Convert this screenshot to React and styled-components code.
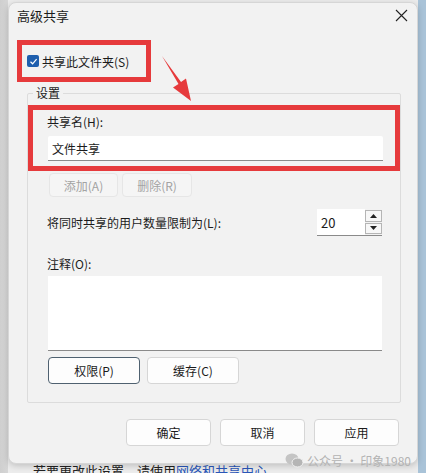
import React from "react";
import styled, { createGlobalStyle } from "styled-components";

const Global = createGlobalStyle`
  html, body { margin: 0; padding: 0; }
  body {
    font-family: "Noto Sans CJK SC", "Noto Sans", sans-serif;
    color: #1b1b1b;
  }
  * { box-sizing: border-box; }
`;

const Page = styled.div`
  position: relative;
  width: 426px;
  height: 473px;
  overflow: hidden;
  background: linear-gradient(90deg, #cfcfcf 0, #d6d6d6 8px, #ececec 8px, #ececec 418px, #a9c3d8 418px);
  padding-top: 2px;
`;

const Dialog = styled.div`
  margin-left: 8px;
  width: 410px;
  height: 462px;
  background: #f2f2f2;
  border: 1px solid #d6d6d6;
  border-radius: 8px;
  box-shadow: 0 2px 6px rgba(0, 0, 0, 0.18);
  display: flex;
  flex-direction: column;
  position: relative;
  z-index: 1;
`;

const TitleBar = styled.div`
  height: 25px;
  display: flex;
  align-items: center;
  justify-content: space-between;
  padding: 0 9px 0 8px;
  font-size: 13px;
`;

const CloseBtn = styled.div`
  width: 14px;
  height: 14px;
  display: flex;
  align-items: center;
  justify-content: center;
`;

const RedBox = styled.div`
  border: 5px solid #e63a3c;
`;

const ShareBox = styled(RedBox)`
  margin: 12px 0 0 8px;
  width: 134px;
  height: 42px;
  display: flex;
  align-items: center;
  gap: 3px;
  padding-left: 5px;
  font-size: 12px;
`;

const Check = styled.span`
  width: 12px;
  height: 12px;
  border-radius: 2px;
  background: #1f5fae;
  display: inline-flex;
  align-items: center;
  justify-content: center;
`;

const Group = styled.fieldset`
  margin: 5px 0 0 18px;
  width: 374px;
  border: 1px solid #dcdcdc;
  border-radius: 2px;
  padding: 0 0 18px 0;
  min-width: 0;
`;

const Legend = styled.legend`
  font-size: 12px;
  padding: 0 3px;
  margin-left: 5px;
  line-height: 12px;
`;

const NameBox = styled(RedBox)`
  margin-top: 6px;
  padding: 3px 12px 5px 15px;
  display: flex;
  flex-direction: column;
  gap: 5px;
`;

const Label = styled.div`
  font-size: 12px;
  line-height: 18px;
  margin-left: ${p => p.$indent || 0}px;
  margin-top: ${p => p.$top || 0}px;
`;

const TextInput = styled.div`
  height: 25px;
  background: #ffffff;
  border-bottom: 1px solid #8a8a8a;
  border-radius: 2px 2px 0 0;
  font-size: 12px;
  display: flex;
  align-items: center;
  padding-left: 4px;
`;

const Inner = styled.div`
  padding: 0 18px 0 20px;
  display: flex;
  flex-direction: column;
`;

const BtnRow = styled.div`
  display: flex;
  gap: ${p => p.$gap}px;
  margin-top: ${p => p.$top}px;
  margin-left: ${p => p.$left || 0}px;
`;

const Btn = styled.div`
  width: ${p => p.$w}px;
  height: ${p => p.$h}px;
  border: 1px solid ${p => (p.$focus ? "#4f6170" : p.$disabled ? "#e6e6e6" : "#d6d6d6")};
  border-radius: 4px;
  background: ${p => (p.$disabled ? "#f5f5f5" : "#fdfdfd")};
  color: ${p => (p.$disabled ? "#a3a3a3" : "#1b1b1b")};
  font-size: 12px;
  display: flex;
  align-items: center;
  justify-content: center;
`;

const LimitRow = styled.div`
  display: flex;
  align-items: center;
  justify-content: space-between;
  margin-top: 12px;
  font-size: 12px;
`;

const Spinner = styled.div`
  display: flex;
  height: 27px;
  background: #ffffff;
  border-bottom: 1px solid #8a8a8a;
`;

const SpinValue = styled.div`
  width: 48px;
  padding-left: 4px;
  display: flex;
  align-items: center;
  font-size: 13px;
`;

const SpinButtons = styled.div`
  width: 17px;
  display: flex;
  flex-direction: column;
  gap: 1px;
  padding: 1px 0;
  background: #f2f2f2;
`;

const SpinBtn = styled.div`
  flex: 1;
  border: 1px solid #b5b5b5;
  background: #f7f7f7;
  display: flex;
  align-items: center;
  justify-content: center;
`;

const TextArea = styled.div`
  margin-top: 3px;
  height: 75px;
  background: #ffffff;
  border-bottom: 1px solid #8a8a8a;
`;

const Footer = styled.div`
  display: flex;
  justify-content: flex-end;
  gap: 9px;
  padding-right: 18px;
  margin-top: 16px;
`;

const Watermark = styled.div`
  position: absolute;
  right: 15px;
  bottom: 4px;
  display: flex;
  align-items: center;
  gap: 3px;
  font-size: 12px;
  color: #b3b3b3;
  z-index: 2;
`;

const Behind = styled.div`
  margin: 0 0 0 33px;
  font-size: 13px;
  line-height: 13px;
  margin-top: 0;
  position: relative;
  z-index: 0;
  color: #222;
`;

const Link = styled.span`
  color: #2a56b8;
  text-decoration: underline;
`;

const ArrowSvg = styled.svg`
  position: absolute;
  left: 0;
  top: 0;
  z-index: 3;
  pointer-events: none;
`;

export default function App() {
  return (
    <>
      <Global />
      <Page>
        <Dialog>
          <TitleBar>
            <span>高级共享</span>
            <CloseBtn>
              <svg width="13" height="13" viewBox="0 0 13 13">
                <path d="M1 1L12 12M12 1L1 12" stroke="#222" strokeWidth="1.1" />
              </svg>
            </CloseBtn>
          </TitleBar>

          <ShareBox>
            <Check>
              <svg width="9" height="9" viewBox="0 0 9 9">
                <path d="M1.5 4.8L3.6 6.8L7.6 2.2" stroke="#fff" strokeWidth="1.2" fill="none" />
              </svg>
            </Check>
            <span>共享此文件夹(S)</span>
          </ShareBox>

          <Group>
            <Legend>设置</Legend>
            <NameBox>
              <Label $indent={-1}>共享名(H):</Label>
              <TextInput>文件共享</TextInput>
            </NameBox>
            <Inner>
              <BtnRow $gap={4} $top={2} $left={1}>
                <Btn $w={69} $h={24} $disabled>添加(A)</Btn>
                <Btn $w={70} $h={24} $disabled>删除(R)</Btn>
              </BtnRow>
              <LimitRow>
                <span style={{ marginLeft: -1 }}>将同时共享的用户数量限制为(L):</span>
                <Spinner>
                  <SpinValue>20</SpinValue>
                  <SpinButtons>
                    <SpinBtn>
                      <svg width="7" height="4" viewBox="0 0 7 4"><path d="M0 4L3.5 0L7 4Z" fill="#222" /></svg>
                    </SpinBtn>
                    <SpinBtn>
                      <svg width="7" height="4" viewBox="0 0 7 4"><path d="M0 0L3.5 4L7 0Z" fill="#222" /></svg>
                    </SpinBtn>
                  </SpinButtons>
                </Spinner>
              </LimitRow>
              <Label $indent={-1} $top={19}>注释(O):</Label>
              <TextArea />
              <BtnRow $gap={7} $top={6}>
                <Btn $w={92} $h={27} $focus>权限(P)</Btn>
                <Btn $w={92} $h={27}>缓存(C)</Btn>
              </BtnRow>
            </Inner>
          </Group>

          <Footer>
            <Btn $w={85} $h={27}>确定</Btn>
            <Btn $w={85} $h={27}>取消</Btn>
            <Btn $w={85} $h={27}>应用</Btn>
          </Footer>
        </Dialog>

        <Behind>
          若要更改此设置，请使用<Link>网络和共享中心</Link>。
        </Behind>

        <Watermark>
          <svg width="19" height="15" viewBox="0 0 19 15">
            <ellipse cx="7" cy="6" rx="6.5" ry="5.5" fill="#c4c4c4" />
            <ellipse cx="12.5" cy="9.5" rx="5.5" ry="4.5" fill="#b5b5b5" stroke="#f2f2f2" strokeWidth="1" />
          </svg>
          <span>公众号 · 印象1980</span>
        </Watermark>

        <ArrowSvg width="426" height="473" viewBox="0 0 426 473">
          <polygon points="162,56 181,82 186,78.5 191,101 173,87.5 178.5,84" fill="#e63a3c" />
        </ArrowSvg>
      </Page>
    </>
  );
}
